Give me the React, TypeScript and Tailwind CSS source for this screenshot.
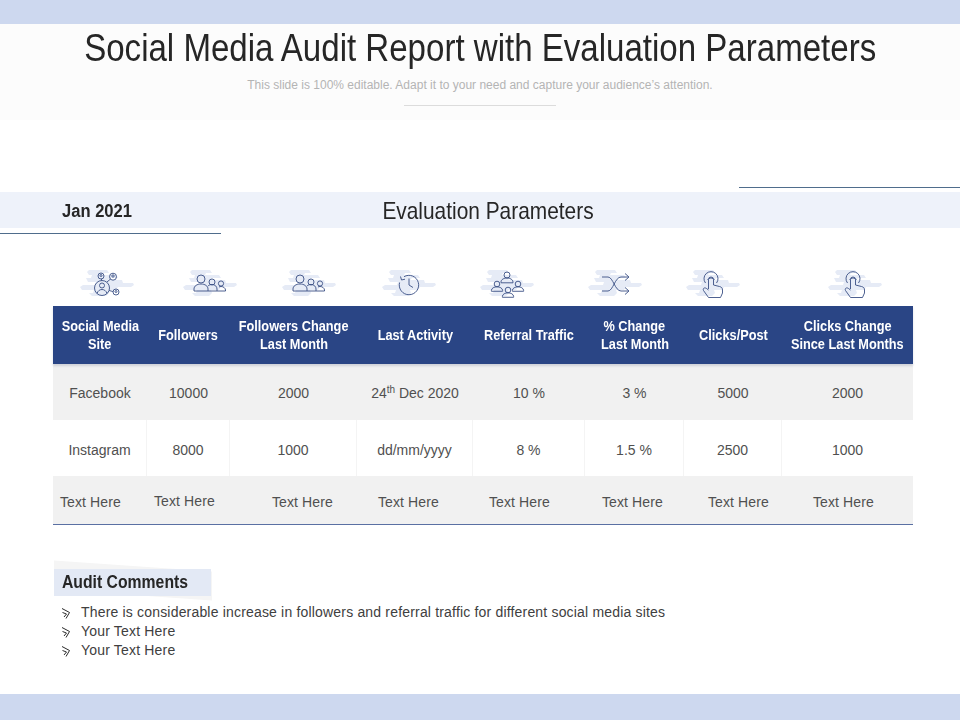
const headers = [
  ['Social Media', 'Site'],
  ['Followers'],
  ['Followers Change', 'Last Month'],
  ['Last Activity'],
  ['Referral Traffic'],
  ['% Change', 'Last Month'],
  ['Clicks/Post'],
  ['Clicks Change', 'Since Last Months'],
];

const instagram = ['Instagram', '8000', '1000', 'dd/mm/yyyy', '8 %', '1.5 %', '2500', '1000'];
const facebook = ['Facebook', '10000', '2000', '', '10 %', '3 %', '5000', '2000'];

// the last row's labels don't sit centered in the slide
const placeholderCells = [
  'pl-[7px]',
  'pl-[7px] pb-[2px]',
  'pl-[42px]',
  'pl-[21px]',
  'pl-[16px]',
  'pl-[17px]',
  'pl-[24px]',
  'pl-[31px]',
];

const columns = 'grid grid-cols-[94px_83px_127px_116px_112px_99px_98px_131px]';

function Brush() {
  return (
    <svg width="54" height="30" viewBox="0 0 54 30" className="absolute left-0 top-0 blur-[0.6px]" fill="#e6ebf6">
      <path d="M9 1h18l2 3h-6l-1 2h14l2 3H30l-2 2h14l1 3h10l1 2-3 2H38l-2 3h-8l1 3-3 3H12l-3-3h4l1-3H2l-2-3 3-2h12l1-3H8L6 9h5l1-3H9L7 3z" />
    </svg>
  );
}

function IconSlot({ offset, children }: { offset: string; children: React.ReactNode }) {
  return (
    <div className={`relative h-[30px] w-[54px] shrink-0 ${offset}`}>
      <Brush />
      <svg
        width="54"
        height="30"
        viewBox="0 0 54 30"
        fill="none"
        stroke="#3a4f85"
        strokeWidth="0.9"
        className="absolute left-0 top-0"
      >
        {children}
      </svg>
    </div>
  );
}

function Person({ x, y, r }: { x: number; y: number; r: number }) {
  return (
    <>
      <circle cx={x} cy={y} r={r} />
      <path
        d={`M${x - r * 2} ${y + r * 2.6}v-${r * 0.3}c0-${r * 0.8} ${r}-${r * 1.3} ${r * 2}-${r * 1.3}s${r * 2} ${r * 0.5} ${r * 2} ${r * 1.3}v${r * 0.3}z`}
      />
    </>
  );
}

function Group() {
  return (
    <>
      <path d="M11 22v-2c0-3 3-5 7-5s7 2 7 5v2z" />
      <circle cx="18" cy="10" r="4" />
      <circle cx="29" cy="13" r="3" />
      <path d="M25 17c1-1 2.500-1.500 4-1.500 3 0 5 2 5 4.500v2h-9" />
      <circle cx="38" cy="14.500" r="2.600" />
      <path d="M36 18c.5-.5 1.500-.5 2-.5 2.500 0 4.500 1.800 4.500 3.500v1H34" />
    </>
  );
}

function Pointer() {
  return (
    <>
      <path d="M19.500 14a7 7 0 1 1 11 0" />
      <path d="M21.500 11a4 4 0 0 1 7 0" />
      <path d="M22.500 20V10.500a2.500 2.500 0 0 1 5 0V16l6 1.500c2 .5 3 1.500 3 3.500v3l-2 4.500H22.500L17.500 21.500c-1-2 1-3.500 3-2l2 1.500" />
    </>
  );
}

function Bullet() {
  return (
    <svg width="10" height="12" viewBox="0 0 10 12" fill="none" stroke="#2b2b2b" strokeWidth="1" className="shrink-0">
      <path d="M1 1.500 8.500 5.500 5 11.500" />
      <path d="M1.500 5.500 5.500 7 3 10" />
    </svg>
  );
}

export default function App() {
  return (
    <div className="flex h-[720px] w-[960px] flex-col overflow-hidden bg-white font-['Liberation_Sans',Arial,sans-serif]">
      <div className="h-6 bg-[#cdd8ef]" />

      {/* Title */}
      <div className="flex h-24 flex-col items-center bg-[#fcfcfc]">
        <h1 className="mt-[2px] scale-x-[0.87] whitespace-nowrap text-[38px] leading-[44px] text-[#262626]">
          Social Media Audit Report with Evaluation Parameters
        </h1>
        <p className="mt-[7px] text-xs leading-4 text-[#b4b4b4]">
          This slide is 100% editable. Adapt it to your need and capture your audience’s attention.
        </p>
        <div className="mt-3 h-px w-[152px] bg-[#dcdcdc]" />
      </div>

      {/* Section band */}
      <div className="mt-[67px] ml-auto h-px w-[221px] bg-[#4f6d8c]" />
      <div className="mt-1 flex h-9 items-center bg-[#eef2fa]">
        <div className="w-[194px] scale-x-[0.92] pt-[1px] text-center text-lg font-bold text-[#262626]">Jan 2021</div>
        <div className="w-[588px] scale-x-[0.87] pt-[1px] text-center text-2xl text-[#262626]">Evaluation Parameters</div>
      </div>
      <div className="mt-[5px] h-px w-[221px] bg-[#4f6d8c]" />

      {/* Icons */}
      <div className="mt-[35px] flex h-[30px] pl-20">
        <IconSlot offset="ml-0">
          <circle cx="22" cy="19" r="7.500" />
          <circle cx="22" cy="16.500" r="2.500" />
          <path d="M17 24.500c1-3 3-4 5-4s4 1 5 4" />
          <circle cx="21" cy="7" r="3" />
          <circle cx="21" cy="6.500" r="1" />
          <circle cx="33" cy="7.700" r="3.500" />
          <circle cx="33" cy="7" r="1.200" />
          <circle cx="36" cy="23" r="3" />
          <circle cx="36" cy="22.500" r="1" />
          <path d="M21.500 10v1.500M27 13l3.500-3M29 21.500l4 1" />
        </IconSlot>
        <IconSlot offset="ml-[49px]">
          <Group />
        </IconSlot>
        <IconSlot offset="ml-[45px]">
          <Group />
        </IconSlot>
        <IconSlot offset="ml-[46px]">
          <path d="M22 7.700A9.700 9.700 0 1 1 17.600 13.500" />
          <path d="M27 9.500V16l4 2.500M18.500 7.500l1 3.500 3.500-.8" />
        </IconSlot>
        <IconSlot offset="ml-[44px]">
          <Person x={27} y={6} r={3} />
          <Person x={17} y={15} r={2.800} />
          <Person x={38} y={15} r={2.800} />
          <Person x={28} y={21} r={2.800} />
        </IconSlot>
        <IconSlot offset="ml-[54px]">
          <path d="M14 8h6c5 0 7 14 13 14h7M14 22h6c5 0 7-14 13-14h7" />
          <path d="M37 4.500l4 3.500-4 3.500M37 18.500l4 3.500-4 3.500" />
        </IconSlot>
        <IconSlot offset="ml-[44px]">
          <Pointer />
        </IconSlot>
        <IconSlot offset="ml-[88px]">
          <Pointer />
        </IconSlot>
      </div>

      {/* Table */}
      <div className="mt-[7px] ml-[53px] w-[860px]">
        <div className={`${columns} relative h-[58px] items-center bg-[#2a4585] shadow-[0_2px_2px_rgba(60,70,110,0.18)] text-[15px] font-bold leading-[18px] text-white`}>
          {headers.map((lines) => (
            <div key={lines[0]} className="flex flex-col items-center">
              {lines.map((line) => (
                <div key={line} className="scale-x-[0.85] whitespace-nowrap">
                  {line}
                </div>
              ))}
            </div>
          ))}
        </div>
        <div className={`${columns} h-14 items-center bg-[#f1f1f1] pt-[2px] text-center text-sm text-[#505050]`}>
          {facebook.map((value, i) =>
            i === 3 ? (
              <div key={i}>
                24<sup className="text-[10px]">th</sup> Dec 2020
              </div>
            ) : (
              <div key={i}>{value}</div>
            ),
          )}
        </div>
        <div className={`${columns} h-14 text-center text-sm text-[#505050]`}>
          {instagram.map((value, i) => (
            <div key={i} className="flex items-center justify-center border-r border-[#f4f4f4] pt-[3px] last:border-r-0">
              {value}
            </div>
          ))}
        </div>
        <div className={`${columns} h-[49px] items-center border-b border-[#5a70a3] bg-[#f1f1f1] pt-[3px] text-sm tracking-[0.1px] text-[#505050]`}>
          {placeholderCells.map((cell, i) => (
            <div key={i} className={cell}>
              Text Here
            </div>
          ))}
        </div>
      </div>

      {/* Comments */}
      <div className="relative mt-[44px] ml-[54px] flex h-[27px] w-[157px] items-center pl-2 text-[18px] font-bold text-[#262626]">
        <div className="absolute -top-[3px] left-0 h-[29px] w-[158px] skew-y-[4deg] bg-[#f5f5f5]" />
        <div className="absolute inset-0 bg-[#e3e9f5]" />
        <span className="relative origin-left scale-x-[0.875] whitespace-nowrap">Audit Comments</span>
      </div>
      <ul className="mt-[7px] ml-[61px] text-sm leading-[19px] text-[#404040]">
        <li className="flex items-center gap-[10px] tracking-[0.18px]">
          <Bullet />
          There is considerable increase in followers and referral traffic for different social media sites
        </li>
        <li className="flex items-center gap-[10px] tracking-[0.18px]">
          <Bullet />
          Your Text Here
        </li>
        <li className="flex items-center gap-[10px] tracking-[0.18px]">
          <Bullet />
          Your Text Here
        </li>
      </ul>

      <div className="mt-auto h-[26px] bg-[#cdd8ef]" />
    </div>
  );
}
